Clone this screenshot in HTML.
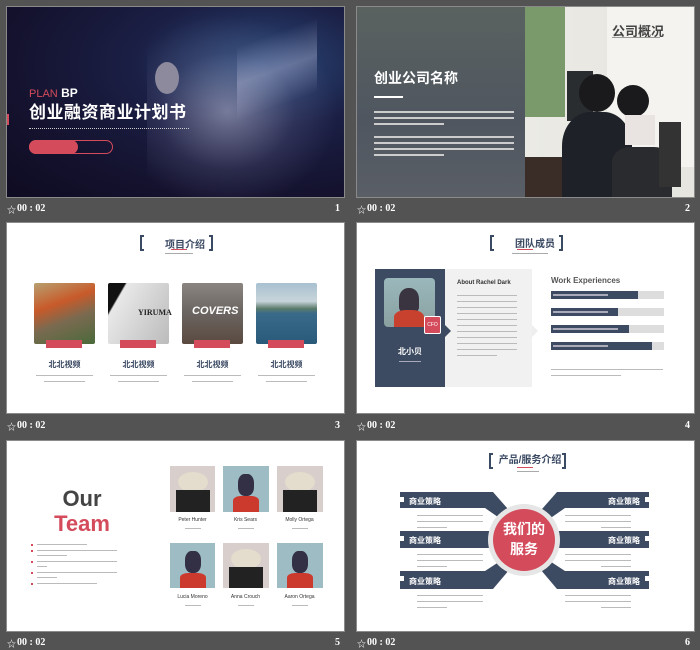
<!DOCTYPE html>
<html><head><meta charset="utf-8"><style>
*{margin:0;padding:0;box-sizing:border-box}
body{width:700px;height:649px;background:#535353;position:relative;overflow:hidden;font-family:"Liberation Sans","Noto Sans CJK SC",sans-serif}
.s{position:absolute;width:337px;height:190px;background:#fff;overflow:hidden;outline:1px solid #8a8a8a}
.a{position:absolute}
.lab{position:absolute;height:14px;width:337px;color:#fff;font:bold 10px "Liberation Serif","Noto Sans CJK SC",serif}
.lab .t{position:absolute;left:10px;top:1px}
.lab .st{position:absolute;left:0;top:1px;font-size:9px;font-weight:normal}
.lab .n{position:absolute;right:4px;top:1px}
.ln{position:absolute;height:2px;background:#bbb}
.hd .b1,.hd .b2{position:absolute;width:4px;height:16px;border:2px solid #3b4a63}
.hd .b1{border-right:none}.hd .b2{border-left:none}
.navy{background:#3d4b62}
.red{background:#d44b5c}
</style></head><body>

<!-- slide 1 -->
<div class="s" style="left:7px;top:7px;background:radial-gradient(ellipse at 75% 30%,#2a4a7a 0%,#1b1f45 35%,#14122e 70%,#0e0b22 100%)">
  <div class="a" style="left:140px;top:0;width:200px;height:190px;background:radial-gradient(ellipse at 40% 55%,rgba(190,190,215,.55),rgba(120,120,160,.2) 40%,transparent 65%)"></div>
  <div class="a" style="left:230px;top:10px;width:80px;height:120px;background:linear-gradient(160deg,transparent 20%,rgba(200,200,230,.35) 45%,transparent 70%)"></div>
  <div class="a" style="left:148px;top:55px;width:24px;height:32px;border-radius:50%;background:#8c8a9c"></div>
  <div class="a" style="left:0;top:107px;width:2px;height:11px;background:#d44b5c"></div>
  <div class="a" style="left:22px;top:80px;color:#d44b5c;font-size:11px;line-height:12px">PLAN<span style="color:#fff;font-size:12px;font-weight:bold"> BP</span></div>
  <div class="a" style="left:22px;top:95px;color:#fff;font-size:17px;font-weight:bold;line-height:22px;letter-spacing:0.5px">创业融资商业计划书</div>
  <div class="a" style="left:22px;top:121px;width:160px;border-top:1px dotted #ccc"></div>
  <div class="a" style="left:22px;top:133px;width:84px;height:14px;border:1px solid #d44b5c;border-radius:7px"></div>
  <div class="a red" style="left:22px;top:133px;width:49px;height:14px;border-radius:7px"></div>
</div>
<div class="lab" style="left:7px;top:202px"><span class="st">☆</span><span class="t">00 : 02</span><span class="n">1</span></div>

<!-- slide 2 -->
<div class="s" style="left:357px;top:7px;background:linear-gradient(90deg,#f0efea 0%,#e6e5df 100%)">
  <div class="a" style="left:0;top:0;width:168px;height:190px;background:linear-gradient(180deg,#5a6260,#4f5660 60%,#5a5f66)"></div>
  <div class="a" style="left:168px;top:0;width:40px;height:110px;background:#7a9a6c"></div>
  <div class="a" style="left:250px;top:0;width:87px;height:160px;background:#f4f3ef"></div>
  <div class="a" style="left:210px;top:64px;width:26px;height:50px;background:#2a2d30"></div>
  <div class="a" style="left:168px;top:150px;width:110px;height:40px;background:#3a2c26"></div>
  <div class="a" style="left:205px;top:105px;width:70px;height:85px;border-radius:40% 40% 0 0;background:#1e2228"></div>
  <div class="a" style="left:222px;top:67px;width:36px;height:38px;border-radius:50%;background:#1a1a1c"></div>
  <div class="a" style="left:260px;top:78px;width:32px;height:32px;border-radius:50%;background:#1a1a1c"></div>
  <div class="a" style="left:268px;top:108px;width:30px;height:30px;background:#e9e4e2"></div>
  <div class="a" style="left:255px;top:140px;width:60px;height:50px;border-radius:30% 30% 0 0;background:#2a2b2e"></div>
  <div class="a" style="left:302px;top:115px;width:22px;height:65px;background:#333"></div>
  <div class="a" style="left:17px;top:61px;color:#fff;font-size:14px;font-weight:bold">创业公司名称</div>
  <div class="a" style="left:17px;top:89px;width:29px;height:2px;background:#fff"></div>
  <div class="ln" style="left:17px;top:104px;width:140px;background:#ccc"></div>
  <div class="ln" style="left:17px;top:110px;width:140px;background:#ccc"></div>
  <div class="ln" style="left:17px;top:116px;width:70px;background:#ccc"></div>
  <div class="ln" style="left:17px;top:129px;width:140px;background:#ccc"></div>
  <div class="ln" style="left:17px;top:135px;width:140px;background:#ccc"></div>
  <div class="ln" style="left:17px;top:141px;width:140px;background:#ccc"></div>
  <div class="ln" style="left:17px;top:147px;width:70px;background:#ccc"></div>
  <div class="a" style="left:255px;top:14px;color:#444;font-size:13px;font-weight:bold">公司概况</div>
  <div class="ln" style="left:255px;top:30px;width:48px;height:1px;background:#999"></div>
</div>
<div class="lab" style="left:357px;top:202px"><span class="st">☆</span><span class="t">00 : 02</span><span class="n">2</span></div>

<!-- slide 3 -->
<div class="s" style="left:7px;top:223px">
  <div class="hd"><div class="b1" style="left:133px;top:12px"></div><div class="b2" style="left:202px;top:12px"></div></div>
  <div class="a" style="left:150px;top:13px;width:56px;text-align:center;color:#3b4a63;font-size:10px;font-weight:bold">项目介绍</div>
  <div class="a red" style="left:164px;top:26px;width:16px;height:1px"></div>
  <div class="ln" style="left:158px;top:30px;width:28px;height:1px;background:#aaa"></div>
  <div class="a" style="left:27px;top:60px;width:61px;height:61px;border-radius:2px;background:linear-gradient(160deg,#b8a070,#c85a2a 35%,#7a6a50 60%,#4a6a3a)"></div>
  <div class="a" style="left:101px;top:60px;width:61px;height:61px;border-radius:2px;background:linear-gradient(120deg,#111 0 18%,#e8e8e8 20%,#bbb 100%)"><div class="a" style="left:30px;top:25px;font:bold 8px 'Liberation Serif',serif;color:#222">YIRUMA</div></div>
  <div class="a" style="left:175px;top:60px;width:61px;height:61px;border-radius:2px;background:linear-gradient(180deg,#8a8580,#6a6460 50%,#5a4a40)"><div class="a" style="left:10px;top:22px;font:italic bold 11px 'Liberation Sans';color:#fff">COVERS</div></div>
  <div class="a" style="left:249px;top:60px;width:61px;height:61px;border-radius:2px;background:linear-gradient(180deg,#a8c0d0,#c8d4da 30%,#5a7a6a 42%,#3a6a8a 50%,#2a5a7a)"></div>
  <div class="a red" style="left:39px;top:117px;width:36px;height:8px"></div>
  <div class="a red" style="left:113px;top:117px;width:36px;height:8px"></div>
  <div class="a red" style="left:187px;top:117px;width:36px;height:8px"></div>
  <div class="a red" style="left:261px;top:117px;width:36px;height:8px"></div>
  <div class="a" style="left:27px;top:136px;width:61px;text-align:center;font-size:8px;font-weight:bold;color:#3b4a63">北北视频</div>
  <div class="a" style="left:101px;top:136px;width:61px;text-align:center;font-size:8px;font-weight:bold;color:#3b4a63">北北视频</div>
  <div class="a" style="left:175px;top:136px;width:61px;text-align:center;font-size:8px;font-weight:bold;color:#3b4a63">北北视频</div>
  <div class="a" style="left:249px;top:136px;width:61px;text-align:center;font-size:8px;font-weight:bold;color:#3b4a63">北北视频</div>
  <div class="ln" style="left:29px;top:152px;width:57px;height:1px"></div><div class="ln" style="left:37px;top:158px;width:41px;height:1px"></div>
  <div class="ln" style="left:103px;top:152px;width:57px;height:1px"></div><div class="ln" style="left:111px;top:158px;width:41px;height:1px"></div>
  <div class="ln" style="left:177px;top:152px;width:57px;height:1px"></div><div class="ln" style="left:185px;top:158px;width:41px;height:1px"></div>
  <div class="ln" style="left:251px;top:152px;width:57px;height:1px"></div><div class="ln" style="left:259px;top:158px;width:41px;height:1px"></div>
</div>
<div class="lab" style="left:7px;top:419px"><span class="st">☆</span><span class="t">00 : 02</span><span class="n">3</span></div>

<!-- slide 4 -->
<div class="s" style="left:357px;top:223px">
  <div class="hd"><div class="b1" style="left:133px;top:12px"></div><div class="b2" style="left:202px;top:12px"></div></div>
  <div class="a" style="left:150px;top:12px;width:56px;text-align:center;color:#3b4a63;font-size:10px;font-weight:bold">团队成员</div>
  <div class="a red" style="left:160px;top:26px;width:16px;height:1px"></div>
  <div class="ln" style="left:155px;top:30px;width:36px;height:1px;background:#aaa"></div>
  <div class="a navy" style="left:18px;top:46px;width:70px;height:118px"></div>
  <div class="a" style="left:88px;top:46px;width:87px;height:118px;background:#f1f1f1"></div>
  <div class="a" style="left:88px;top:102px;width:0;height:0;border-top:6px solid transparent;border-bottom:6px solid transparent;border-left:6px solid #3d4b62"></div>
  <div class="a" style="left:175px;top:102px;width:0;height:0;border-top:6px solid transparent;border-bottom:6px solid transparent;border-left:6px solid #eee"></div>
  <div class="a" style="left:27px;top:55px;width:51px;height:49px;border-radius:4px;background:linear-gradient(180deg,#9ab8bc,#8aa0a0)"><div class="a" style="left:15px;top:10px;width:20px;height:24px;border-radius:45% 45% 20% 20%;background:#3a3440"></div><div class="a" style="left:10px;top:32px;width:30px;height:17px;border-radius:40% 40% 0 0;background:#c8402e"></div></div>
  <div class="a red" style="left:67px;top:93px;width:17px;height:18px;border:1px solid #fff;border-radius:2px;color:#fff;font-size:5px;text-align:center;line-height:16px">CFO</div>
  <div class="a" style="left:18px;top:123px;width:70px;text-align:center;color:#fff;font-size:8px;font-weight:bold">北小贝</div>
  <div class="ln" style="left:42px;top:138px;width:22px;height:1px;background:#aab"></div>
  <div class="a" style="left:100px;top:57px;font-size:6px;color:#333;font-weight:bold">About  Rachel Dark</div>
  <div class="ln" style="left:100px;top:72px;width:60px;height:1px"></div><div class="ln" style="left:100px;top:78px;width:60px;height:1px"></div><div class="ln" style="left:100px;top:84px;width:60px;height:1px"></div><div class="ln" style="left:100px;top:90px;width:60px;height:1px"></div><div class="ln" style="left:100px;top:96px;width:60px;height:1px"></div><div class="ln" style="left:100px;top:102px;width:60px;height:1px"></div><div class="ln" style="left:100px;top:108px;width:60px;height:1px"></div><div class="ln" style="left:100px;top:114px;width:60px;height:1px"></div><div class="ln" style="left:100px;top:120px;width:60px;height:1px"></div><div class="ln" style="left:100px;top:126px;width:60px;height:1px"></div><div class="ln" style="left:100px;top:132px;width:40px;height:1px"></div>
  <div class="a" style="left:194px;top:53px;font-size:8px;color:#555;font-weight:bold">Work Experiences</div>
  <div class="a" style="left:194px;top:68px;width:113px;height:8px;background:#ddd"></div><div class="a navy" style="left:194px;top:68px;width:87px;height:8px"></div>
  <div class="a" style="left:194px;top:85px;width:113px;height:8px;background:#ddd"></div><div class="a navy" style="left:194px;top:85px;width:67px;height:8px"></div>
  <div class="a" style="left:194px;top:102px;width:113px;height:8px;background:#ddd"></div><div class="a navy" style="left:194px;top:102px;width:78px;height:8px"></div>
  <div class="a" style="left:194px;top:119px;width:113px;height:8px;background:#ddd"></div><div class="a navy" style="left:194px;top:119px;width:101px;height:8px"></div>
  <div class="ln" style="left:196px;top:71px;width:55px;height:2px;background:#aab"></div>
  <div class="ln" style="left:196px;top:88px;width:55px;height:2px;background:#aab"></div>
  <div class="ln" style="left:196px;top:105px;width:65px;height:2px;background:#aab"></div>
  <div class="ln" style="left:196px;top:122px;width:55px;height:2px;background:#aab"></div>
  <div class="ln" style="left:194px;top:146px;width:112px;height:1px"></div><div class="ln" style="left:194px;top:152px;width:70px;height:1px"></div>
</div>
<div class="lab" style="left:357px;top:419px"><span class="st">☆</span><span class="t">00 : 02</span><span class="n">4</span></div>

<!-- slide 5 -->
<div class="s" style="left:7px;top:441px">
  <div class="a" style="left:25px;top:45px;width:100px;text-align:center;font-size:22px;font-weight:bold;color:#444">Our</div>
  <div class="a" style="left:25px;top:70px;width:100px;text-align:center;font-size:22px;font-weight:bold;color:#d44b5c">Team</div>
  <div class="a red" style="left:24px;top:103px;width:2px;height:2px"></div><div class="ln" style="left:30px;top:103px;width:50px;height:1px"></div>
  <div class="a red" style="left:24px;top:109px;width:2px;height:2px"></div><div class="ln" style="left:30px;top:109px;width:80px;height:1px"></div><div class="ln" style="left:30px;top:114px;width:30px;height:1px"></div>
  <div class="a red" style="left:24px;top:120px;width:2px;height:2px"></div><div class="ln" style="left:30px;top:120px;width:80px;height:1px"></div><div class="ln" style="left:30px;top:125px;width:10px;height:1px"></div>
  <div class="a red" style="left:24px;top:131px;width:2px;height:2px"></div><div class="ln" style="left:30px;top:131px;width:80px;height:1px"></div><div class="ln" style="left:30px;top:136px;width:20px;height:1px"></div>
  <div class="a red" style="left:24px;top:142px;width:2px;height:2px"></div><div class="ln" style="left:30px;top:142px;width:60px;height:1px"></div>
  <!-- photos -->
  <div class="a" style="left:163px;top:25px;width:45px;height:46px;background:#d8cfcc"><div class="a" style="left:8px;top:6px;width:30px;height:20px;border-radius:50%;background:#e4dccc"></div><div class="a" style="left:6px;top:24px;width:34px;height:22px;background:#222"></div></div>
  <div class="a" style="left:216px;top:25px;width:46px;height:46px;background:#9dbcc4"><div class="a" style="left:15px;top:8px;width:16px;height:22px;border-radius:40%;background:#332f44"></div><div class="a" style="left:10px;top:30px;width:26px;height:16px;border-radius:30% 30% 0 0;background:#cc3a2e"></div></div>
  <div class="a" style="left:270px;top:25px;width:46px;height:46px;background:#d8cfcc"><div class="a" style="left:8px;top:6px;width:30px;height:20px;border-radius:50%;background:#e4dccc"></div><div class="a" style="left:6px;top:24px;width:34px;height:22px;background:#222"></div></div>
  <div class="a" style="left:163px;top:102px;width:45px;height:45px;background:#9dbcc4"><div class="a" style="left:15px;top:8px;width:16px;height:22px;border-radius:40%;background:#332f44"></div><div class="a" style="left:10px;top:30px;width:26px;height:15px;border-radius:30% 30% 0 0;background:#cc3a2e"></div></div>
  <div class="a" style="left:216px;top:102px;width:46px;height:45px;background:#d8cfcc"><div class="a" style="left:8px;top:6px;width:30px;height:20px;border-radius:50%;background:#e4dccc"></div><div class="a" style="left:6px;top:24px;width:34px;height:21px;background:#222"></div></div>
  <div class="a" style="left:270px;top:102px;width:46px;height:45px;background:#9dbcc4"><div class="a" style="left:15px;top:8px;width:16px;height:22px;border-radius:40%;background:#332f44"></div><div class="a" style="left:10px;top:30px;width:26px;height:15px;border-radius:30% 30% 0 0;background:#cc3a2e"></div></div>
  <div class="a" style="left:160px;top:76px;width:51px;text-align:center;font-size:5px;color:#333">Peter Hunter</div>
  <div class="a" style="left:213px;top:76px;width:51px;text-align:center;font-size:5px;color:#333">Kris Sears</div>
  <div class="a" style="left:267px;top:76px;width:51px;text-align:center;font-size:5px;color:#333">Molly Ortega</div>
  <div class="a" style="left:160px;top:153px;width:51px;text-align:center;font-size:5px;color:#333">Lucia Moreno</div>
  <div class="a" style="left:213px;top:153px;width:51px;text-align:center;font-size:5px;color:#333">Anna Crouch</div>
  <div class="a" style="left:267px;top:153px;width:51px;text-align:center;font-size:5px;color:#333">Aaron Ortega</div>
  <div class="ln" style="left:178px;top:87px;width:16px;height:1px"></div><div class="ln" style="left:231px;top:87px;width:16px;height:1px"></div><div class="ln" style="left:285px;top:87px;width:16px;height:1px"></div>
  <div class="ln" style="left:178px;top:164px;width:16px;height:1px"></div><div class="ln" style="left:231px;top:164px;width:16px;height:1px"></div><div class="ln" style="left:285px;top:164px;width:16px;height:1px"></div>
</div>
<div class="lab" style="left:7px;top:636px"><span class="st">☆</span><span class="t">00 : 02</span><span class="n">5</span></div>

<!-- slide 6 -->
<div class="s" style="left:357px;top:441px">
  <div class="hd"><div class="b1" style="left:132px;top:12px"></div><div class="b2" style="left:205px;top:12px"></div></div>
  <div class="a" style="left:138px;top:10px;width:70px;text-align:center;color:#3b4a63;font-size:10px;font-weight:bold">产品/服务介绍</div>
  <div class="a red" style="left:160px;top:26px;width:16px;height:1px"></div>
  <div class="ln" style="left:160px;top:30px;width:22px;height:1px;background:#aaa"></div>
  <svg class="a" style="left:0;top:0" width="337" height="190">
    <g fill="#3d4b62">
      <polygon points="43,51 136,51 158,76 151,83 128,67 43,67"/>
      <polygon points="43,90 140,90 140,107 43,107"/>
      <polygon points="43,130 128,130 151,115 158,122 136,148 43,148"/>
      <polygon points="292,51 200,51 178,76 185,83 208,67 292,67"/>
      <polygon points="292,90 196,90 196,107 292,107"/>
      <polygon points="292,130 208,130 185,115 178,122 200,148 292,148"/>
    </g>
    <g fill="#fff"><rect x="43" y="56" width="4" height="5"/><rect x="43" y="95" width="4" height="5"/><rect x="43" y="135" width="4" height="5"/><rect x="288" y="56" width="4" height="5"/><rect x="288" y="95" width="4" height="5"/><rect x="288" y="135" width="4" height="5"/></g>
    <circle cx="167" cy="99" r="36" fill="#e6e6e6"/>
    <circle cx="167" cy="99" r="31" fill="#d44b5c"/>
  </svg>
  <div class="a" style="left:52px;top:55px;color:#fff;font-size:8px;font-weight:bold">商业策略</div>
  <div class="a" style="left:52px;top:94px;color:#fff;font-size:8px;font-weight:bold">商业策略</div>
  <div class="a" style="left:52px;top:135px;color:#fff;font-size:8px;font-weight:bold">商业策略</div>
  <div class="a" style="left:251px;top:55px;color:#fff;font-size:8px;font-weight:bold">商业策略</div>
  <div class="a" style="left:251px;top:94px;color:#fff;font-size:8px;font-weight:bold">商业策略</div>
  <div class="a" style="left:251px;top:135px;color:#fff;font-size:8px;font-weight:bold">商业策略</div>
  <div class="a" style="left:137px;top:78px;width:60px;text-align:center;color:#fff;font-size:14px;font-weight:bold;line-height:20px">我们的<br>服务</div>
  <div class="ln" style="left:60px;top:74px;width:66px;height:1px"></div><div class="ln" style="left:60px;top:80px;width:66px;height:1px"></div><div class="ln" style="left:60px;top:86px;width:30px;height:1px"></div>
  <div class="ln" style="left:60px;top:113px;width:66px;height:1px"></div><div class="ln" style="left:60px;top:119px;width:66px;height:1px"></div><div class="ln" style="left:60px;top:125px;width:30px;height:1px"></div>
  <div class="ln" style="left:60px;top:154px;width:66px;height:1px"></div><div class="ln" style="left:60px;top:160px;width:66px;height:1px"></div><div class="ln" style="left:60px;top:166px;width:30px;height:1px"></div>
  <div class="ln" style="left:208px;top:74px;width:66px;height:1px"></div><div class="ln" style="left:208px;top:80px;width:66px;height:1px"></div><div class="ln" style="left:244px;top:86px;width:30px;height:1px"></div>
  <div class="ln" style="left:208px;top:113px;width:66px;height:1px"></div><div class="ln" style="left:208px;top:119px;width:66px;height:1px"></div><div class="ln" style="left:244px;top:125px;width:30px;height:1px"></div>
  <div class="ln" style="left:208px;top:154px;width:66px;height:1px"></div><div class="ln" style="left:208px;top:160px;width:66px;height:1px"></div><div class="ln" style="left:244px;top:166px;width:30px;height:1px"></div>
</div>
<div class="lab" style="left:357px;top:636px"><span class="st">☆</span><span class="t">00 : 02</span><span class="n">6</span></div>

</body></html>
